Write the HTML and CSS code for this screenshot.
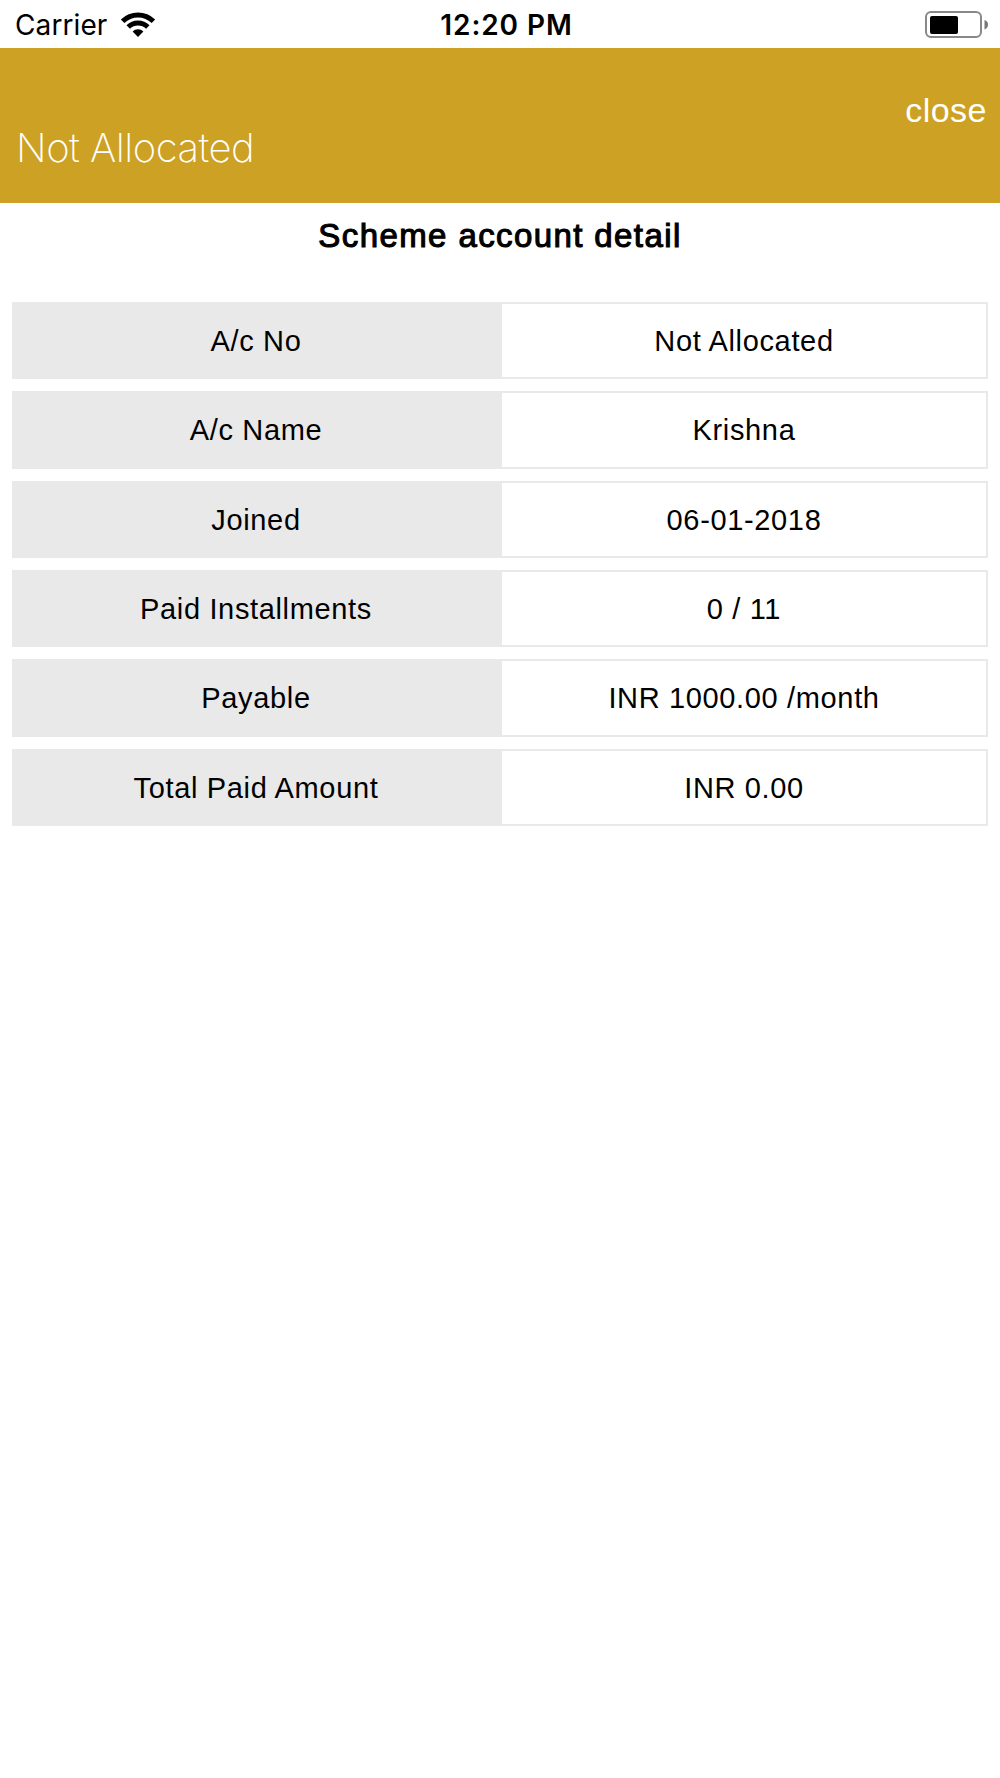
FILE: index.html
```html
<!DOCTYPE html>
<html lang="en">
<head>
    <meta charset="UTF-8">
    <meta name="viewport" content="width=device-width, initial-scale=1.0">
    <title>Scheme account detail</title>
    <link rel="stylesheet" href="styles.css">
</head>
<body>
    <div class="status-bar">
        <div class="status-left">
            <span class="carrier">Carrier</span>
            <svg class="wifi" width="36" height="26" viewBox="0 0 36 26">
                <path d="M18 25 L12.6 19.6 A7.6 7.6 0 0 1 23.4 19.6 Z"/>
                <path class="arc" d="M8.2 15 A14 14 0 0 1 27.8 15"/>
                <path class="arc" d="M2.6 9.2 A22 22 0 0 1 33.4 9.2"/>
            </svg>
        </div>
        <span class="time">12:20 PM</span>
        <div class="status-right">
            <svg class="battery" width="64" height="28" viewBox="0 0 64 28">
                <rect class="shell" x="1" y="1" width="55" height="25" rx="5"/>
                <rect x="5" y="5" width="28" height="18" rx="2"/>
                <path class="tip" d="M59.5 9 Q63 10 63 13.5 Q63 17 59.5 18.5 Z"/>
            </svg>
        </div>
    </div>

    <header class="app-header">
        <h1>Not Allocated</h1>
        <button class="close-btn">close</button>
    </header>

    <main>
        <h2>Scheme account detail</h2>
        <div class="detail-list">
            <div class="detail-row">
                <div class="label">A/c No</div>
                <div class="value">Not Allocated</div>
            </div>
            <div class="detail-row">
                <div class="label">A/c Name</div>
                <div class="value">Krishna</div>
            </div>
            <div class="detail-row">
                <div class="label">Joined</div>
                <div class="value">06-01-2018</div>
            </div>
            <div class="detail-row">
                <div class="label">Paid Installments</div>
                <div class="value">0 / 11</div>
            </div>
            <div class="detail-row">
                <div class="label">Payable</div>
                <div class="value">INR 1000.00 /month</div>
            </div>
            <div class="detail-row">
                <div class="label">Total Paid Amount</div>
                <div class="value">INR 0.00</div>
            </div>
        </div>
    </main>
</body>
</html>
```
FILE: styles.css
```css
* {
    margin: 0;
    padding: 0;
    box-sizing: border-box;
}

body {
    font-family: 'Liberation Sans', Arial, sans-serif;
    background-color: #fff;
    color: #000;
    min-height: 100vh;
}

/* Status bar */
.status-bar {
    height: 48px;
    padding: 3px 11px 0 15px;
    display: grid;
    grid-template-columns: 1fr auto 1fr;
    align-items: center;
    font-family: Inter, sans-serif;
    font-size: 28px;
    line-height: 45px;
}

.status-left {
    display: flex;
    align-items: center;
    gap: 13px;
}

.carrier {
    letter-spacing: 0.1px;
}

.wifi {
    margin-top: -2px;
}

.wifi .arc {
    fill: none;
    stroke: #000;
    stroke-width: 5;
}

.time {
    font-weight: 600;
    letter-spacing: 0.9px;
    margin-left: 9px;
}

.status-right {
    display: flex;
    justify-content: flex-end;
}

.battery {
    margin-top: -2px;
}

.battery .shell {
    fill: none;
    stroke: #888;
    stroke-width: 2;
}

.battery .tip {
    fill: #777;
}

/* Header */
.app-header {
    height: 155px;
    padding: 42px 13px 0 16px;
    display: flex;
    justify-content: space-between;
    align-items: flex-start;
    background-color: #cda123;
    color: #fff;
}

.app-header h1 {
    margin-top: 34px;
    font-family: Inter, sans-serif;
    font-size: 40px;
    font-weight: 250;
    line-height: 48px;
    letter-spacing: -0.5px;
}

.close-btn {
    border: none;
    background: none;
    color: #fff;
    font-family: inherit;
    font-size: 34px;
    line-height: 40px;
    letter-spacing: 0.5px;
}

/* Account details */
h2 {
    padding-top: 13px;
    font-size: 33px;
    font-weight: 400;
    line-height: 40px;
    letter-spacing: 1.4px;
    text-align: center;
    -webkit-text-stroke: 1.1px #000;
}

.detail-list {
    margin: 46px 12px 0;
    display: flex;
    flex-direction: column;
    gap: 12px;
}

.detail-row {
    height: 77.33px;
    display: grid;
    grid-template-columns: 488px 1fr;
    border: 2px solid #e9e9e9;
    font-size: 29px;
    line-height: 75px;
    letter-spacing: 0.65px;
    text-align: center;
}

.label {
    padding-right: 4px;
    background-color: #e9e9e9;
}

.label,
.value {
    height: 73.33px;
}
```
